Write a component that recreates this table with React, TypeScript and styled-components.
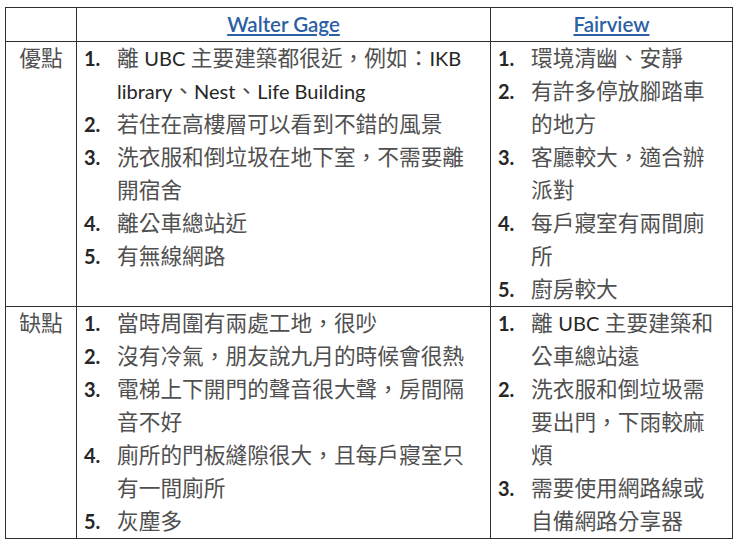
import React from 'react'
import styled, {createGlobalStyle} from 'styled-components'

const GlobalStyle = createGlobalStyle`
  html, body {
    margin: 0;
    background: #fff;
  }
  body {
    font-family: Lato, "Noto Sans CJK TC", sans-serif;
  }
`

const Page = styled.div`
  padding: 7px 0 0 5px;
`

const Table = styled.table`
  border-collapse: collapse;
  table-layout: fixed;
  width: 725px;
  color: #505050;
  font-size: 21.7px;
  line-height: 33px;
`

const HeadCell = styled.th<{ width: number }>`
  width: ${props => props.width}px;
  height: 33px;
  padding: 0;
  border: 1.5px solid #2e2e2e;
  font-weight: normal;
  font-size: 20.5px;
  text-align: center;
  vertical-align: middle;
`

const HeadLink = styled.a`
  color: #2b5fa6;
  font-weight: 600;
  text-decoration: underline;
  text-decoration-thickness: 1.5px;
  text-underline-offset: 2px;
`

const LabelCell = styled.td`
  padding: 0;
  border: 1.5px solid #2e2e2e;
  text-align: center;
  vertical-align: top;
`

const ListCell = styled.td`
  padding: 0 6px 0 7px;
  border: 1.5px solid #2e2e2e;
  vertical-align: top;
`

const List = styled.ol`
  margin: 0;
  padding: 0;
  list-style: none;
`

const Item = styled.li`
  display: grid;
  grid-template-columns: 33px 1fr;
`

const Num = styled.span`
  font-weight: bold;
  color: #262626;
  font-size: 20px;
`

const Latin = styled.span`
  color: #262626;
  font-size: 20px;
`

const rows = [
  {
    label: '優點',
    gage: [
      '離 UBC 主要建築都很近，例如：IKB library、Nest、Life Building',
      '若住在高樓層可以看到不錯的風景',
      '洗衣服和倒垃圾在地下室，不需要離開宿舍',
      '離公車總站近',
      '有無線網路',
    ],
    fairview: [
      '環境清幽、安靜',
      '有許多停放腳踏車的地方',
      '客廳較大，適合辦派對',
      '每戶寢室有兩間廁所',
      '廚房較大',
    ],
  },
  {
    label: '缺點',
    gage: [
      '當時周圍有兩處工地，很吵',
      '沒有冷氣，朋友說九月的時候會很熱',
      '電梯上下開門的聲音很大聲，房間隔音不好',
      '廁所的門板縫隙很大，且每戶寢室只有一間廁所',
      '灰塵多',
    ],
    fairview: [
      '離 UBC 主要建築和公車總站遠',
      '洗衣服和倒垃圾需要出門，下雨較麻煩',
      '需要使用網路線或自備網路分享器',
    ],
  },
]

// latin words are set a little smaller and darker than the chinese text
const Text = ({text}: { text: string }) => (
  <span>
    {text.split(/([A-Za-z][A-Za-z ]*[A-Za-z])/).filter(Boolean).map((part, i) =>
      /^[A-Za-z]/.test(part) ? <Latin key={i}>{part}</Latin> : part
    )}
  </span>
)

const Items = ({items}: { items: string[] }) => (
  <List>
    {items.map((text, i) => (
      <Item key={i}>
        <Num>{i + 1}.</Num>
        <Text text={text}/>
      </Item>
    ))}
  </List>
)

export default function App() {
  return (
    <Page>
      <GlobalStyle/>
      <Table>
        <thead>
          <tr>
            <HeadCell width={70}/>
            <HeadCell width={413}><HeadLink>Walter Gage</HeadLink></HeadCell>
            <HeadCell width={241}><HeadLink>Fairview</HeadLink></HeadCell>
          </tr>
        </thead>
        <tbody>
          {rows.map(row => (
            <tr key={row.label}>
              <LabelCell>{row.label}</LabelCell>
              <ListCell><Items items={row.gage}/></ListCell>
              <ListCell><Items items={row.fairview}/></ListCell>
            </tr>
          ))}
        </tbody>
      </Table>
    </Page>
  )
}
